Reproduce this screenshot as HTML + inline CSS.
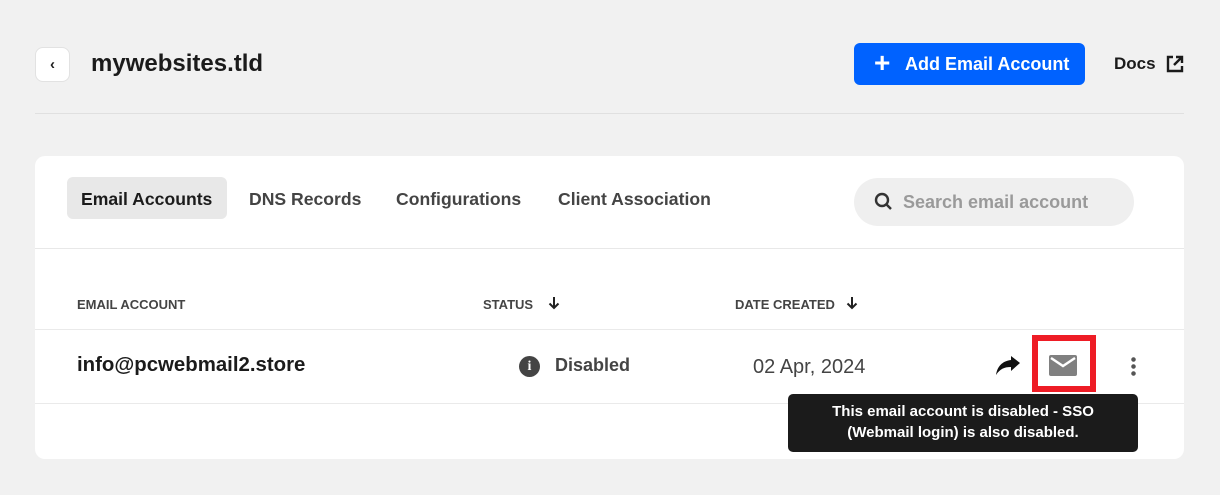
<!DOCTYPE html><html><head><style>
body{margin:0;width:1220px;height:495px;background:#f1f1f1;font-family:"Liberation Sans",sans-serif;position:relative;overflow:hidden;color:#1b1b1b}
.a{position:absolute}
</style></head><body>
<div class="a" style="left:35px;top:47px;width:33px;height:33px;background:#fff;border:1px solid #e2e2e2;border-radius:8px;text-align:center;line-height:33px;font-weight:bold;font-size:15px">‹</div>
<div class="a" style="left:91px;top:50px;font-size:24px;font-weight:bold">mywebsites.tld</div>
<div class="a" style="left:854px;top:43px;width:231px;height:42px;background:#0062ff;border-radius:6px;color:#fff;font-weight:bold;font-size:18px;line-height:42px"><span style="position:absolute;left:20px;font-size:28px;top:-1px">+</span><span style="position:absolute;left:51px">Add Email Account</span></div>
<div class="a" style="left:1114px;top:54px;font-weight:bold;font-size:17px">Docs</div>
<svg class="a" style="left:1165px;top:54px" width="20" height="20" viewBox="0 0 20 20" fill="none" stroke="#1b1b1b" stroke-width="2.4"><path d="M8 3H3v14h14v-5M11 3h6v6M17 3L9 11"/></svg>
<div class="a" style="left:35px;top:113px;width:1149px;height:1px;background:#e0e0e0"></div>
<div class="a" style="left:35px;top:156px;width:1149px;height:303px;background:#fff;border-radius:10px"></div>
<div class="a" style="left:67px;top:177px;width:160px;height:42px;background:#e8e8e8;border-radius:6px"></div>
<div class="a" style="left:81px;top:189px;font-size:17.6px;font-weight:bold">Email Accounts</div>
<div class="a" style="left:249px;top:189px;font-size:17.6px;font-weight:bold;color:#444">DNS Records</div>
<div class="a" style="left:396px;top:189px;font-size:17.6px;font-weight:bold;color:#444">Configurations</div>
<div class="a" style="left:558px;top:189px;font-size:17.6px;font-weight:bold;color:#444">Client Association</div>
<div class="a" style="left:854px;top:178px;width:280px;height:48px;background:#efefef;border-radius:24px"></div>
<svg class="a" style="left:874px;top:192px" width="20" height="20" viewBox="0 0 20 20" fill="none" stroke="#333" stroke-width="2.4"><circle cx="8" cy="8" r="6"/><path d="M12.5 12.5L17 17"/></svg>
<div class="a" style="left:903px;top:192px;font-size:18px;font-weight:bold;color:#9a9a9a">Search email account</div>
<div class="a" style="left:35px;top:248px;width:1149px;height:1px;background:#e8e8e8"></div>
<div class="a" style="left:77px;top:297px;font-size:13px;font-weight:bold;color:#444">EMAIL ACCOUNT</div>
<div class="a" style="left:483px;top:297px;font-size:13px;font-weight:bold;color:#444">STATUS</div>
<svg class="a" style="left:548px;top:296px" width="12" height="14" viewBox="0 0 12 14" fill="none" stroke="#222" stroke-width="2"><path d="M6 1v11M1.5 7.5L6 12l4.5-4.5"/></svg>
<div class="a" style="left:735px;top:297px;font-size:13px;font-weight:bold;color:#444">DATE CREATED</div>
<svg class="a" style="left:846px;top:296px" width="12" height="14" viewBox="0 0 12 14" fill="none" stroke="#222" stroke-width="2"><path d="M6 1v11M1.5 7.5L6 12l4.5-4.5"/></svg>
<div class="a" style="left:35px;top:329px;width:1149px;height:1px;background:#eaeaea"></div>
<div class="a" style="left:35px;top:403px;width:1149px;height:1px;background:#eaeaea"></div>
<div class="a" style="left:77px;top:354px;font-size:20.4px;font-weight:bold">info@pcwebmail2.store</div>
<div class="a" style="left:519px;top:356px;width:21px;height:21px;border-radius:50%;background:#444;color:#fff;font-size:14px;font-weight:bold;text-align:center;line-height:21px;font-family:'Liberation Serif',serif">i</div>
<div class="a" style="left:555px;top:355px;font-size:18px;font-weight:bold;color:#444">Disabled</div>
<div class="a" style="left:753px;top:356px;font-size:20px;color:#444">02 Apr, 2024</div>
<svg class="a" style="left:994px;top:354px" width="28" height="24" viewBox="0 0 28 24"><path d="M26 9L17 2v4C8 7 3 13 2 21c4-6 8-8 15-8v4z" fill="#111"/></svg>
<div class="a" style="left:1032px;top:335px;width:52px;height:45px;border:6px solid #ee1c25"></div>
<svg class="a" style="left:1049px;top:355px" width="28" height="21" viewBox="0 0 28 21"><rect x="0" y="0" width="28" height="21" rx="2" fill="#808080"/><path d="M2 3l12 8 12-8" fill="none" stroke="#fff" stroke-width="2.4"/></svg>
<div class="a" style="left:1131px;top:356px;width:5px;height:20px;background:radial-gradient(circle,#555 2px,transparent 2.5px) 0 0/5px 7px"></div>
<div class="a" style="left:788px;top:394px;width:350px;height:58px;background:#1b1b1b;border-radius:5px;color:#fff;font-size:15px;font-weight:bold;text-align:center;line-height:21px;padding-top:7px;box-sizing:border-box">This email account is disabled - SSO<br>(Webmail login) is also disabled.</div>
</body></html>
